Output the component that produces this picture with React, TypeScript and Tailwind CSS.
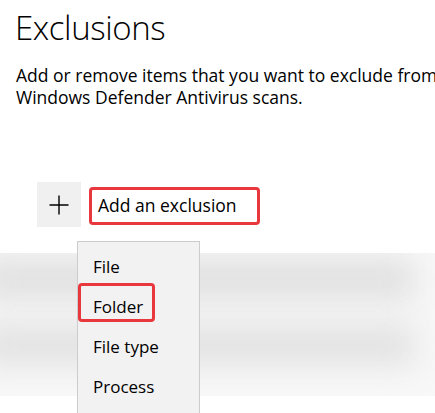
export default function App() {
  return (
    <div
      className="relative w-[435px] h-[413px] overflow-hidden bg-white text-black"
      style={{ fontFamily: '"Open Sans", "Noto Sans", sans-serif' }}
    >
      {/* Header */}
      <h1 className="pl-[15px] pt-[8px] text-[33px] leading-[40px] font-light tracking-[-0.4px]">
        Exclusions
      </h1>
      <p className="mt-[16px] pl-4 text-[17.5px] leading-[22px] whitespace-nowrap">
        Add or remove items that you want to exclude from
        <br />
        Windows Defender Antivirus scans.
      </p>

      {/* Add button row */}
      <div className="mt-[74px] flex items-center pl-[37px]">
        <div className="w-[44px] h-[45px] bg-[#f0f0f0] flex items-center justify-center">
          <svg width="20" height="20" viewBox="0 0 20 20">
            <path d="M10 0.5v19M0.5 10h19" stroke="#000" strokeWidth="1.4" />
          </svg>
        </div>
        <div className="ml-[8px] mt-[2px] w-[171px] h-[38px] border-[3px] border-[#e8383d] rounded-[4px] flex items-center pl-[6px] text-[17.5px]">
          Add an exclusion
        </div>
      </div>

      {/* Blurred list underneath */}
      <div className="mt-[26px] h-[143px] overflow-hidden bg-[#f8f8f8]">
        <div className="flex flex-col gap-[26px] pt-[6px] -ml-[20px] mr-[20px]">
          <div className="h-[40px] bg-[#dfdfdf] blur-lg" />
          <div className="h-[40px] bg-[#e1e1e1] blur-lg" />
        </div>
      </div>

      {/* Dropdown menu */}
      <div className="absolute left-[77px] top-[241px] w-[123px] h-[190px] bg-[#f2f2f2] border border-[#cccccc] pt-[5px] text-[17px]">
        {["File", "Folder", "File type", "Process"].map((t) => (
          <div key={t} className="h-[40px] flex items-center pl-[15px]">
            {t}
          </div>
        ))}
        <div className="absolute left-0 top-[41px] w-[77px] h-[39px] border-[3px] border-[#e8383d] rounded-[4px]" />
      </div>
    </div>
  );
}
